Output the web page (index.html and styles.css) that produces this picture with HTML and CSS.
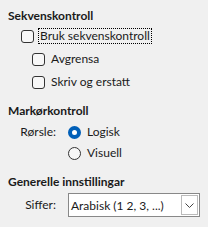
FILE: index.html
```html
<!DOCTYPE html>
<html lang="nn">
<head>
  <meta charset="UTF-8">
  <title>Innstillingar</title>
  <link rel="stylesheet" href="styles.css">
</head>
<body>

  <div class="panel">
    <h2 class="heading">Sekvenskontroll</h2>
    <label class="check first">
      <span class="box"></span>
      <span class="text focused">Bruk sekvenskontroll</span>
    </label>
    <label class="check sub">
      <span class="box"></span>
      <span class="text">Avgrensa</span>
    </label>
    <label class="check sub">
      <span class="box"></span>
      <span class="text">Skriv og erstatt</span>
    </label>

    <h2 class="heading">Markørkontroll</h2>
    <div class="field radio-field">
      <span class="field-label">Rørsle:</span>
      <div class="radios">
        <label class="radio checked"><span class="dot"></span><span class="text">Logisk</span></label>
        <label class="radio"><span class="dot"></span><span class="text">Visuell</span></label>
      </div>
    </div>

    <h2 class="heading">Generelle innstillingar</h2>
    <div class="field select-field">
      <span class="field-label">Siffer:</span>
      <div class="select">
        <span class="select-value">Arabisk (1 2, 3, ...)</span>
        <span class="select-btn">
          <svg width="9" height="5" viewBox="0 0 9 5"><path d="M0.5 0.5 L4.5 4.5 L8.5 0.5" fill="none" stroke="#444" stroke-width="1"/></svg>
        </span>
      </div>
    </div>
  </div>

</body>
</html>
```

FILE: styles.css
```css
body {
  margin: 0;
  padding: 0;
  background-color: #f0f0f0;
  color: #1a1a1a;
  font-family: 'Lato', 'Noto Sans', sans-serif;
  font-size: 12px;
}

.panel {
  display: flex;
  flex-direction: column;
  padding: 8px 0 0 8px;
}

.heading {
  margin: 0;
  font-size: 12px;
  font-weight: bold;
  line-height: 16px;
}

.check {
  display: flex;
  align-items: center;
  gap: 4px;
  height: 16px;
}

.check.first {
  margin: 4px 0 0 13px;
}

.check.sub {
  margin: 7px 0 0 24px;
}

.box {
  width: 11px;
  height: 11px;
  border: 1px solid #333;
  border-radius: 3px;
  background-color: #f7f7f7;
}

.text {
  line-height: 14px;
  padding: 0 1px;
  border: 1px dotted transparent;
}

.text.focused {
  border-color: #000;
}

.check.sub + .heading {
  margin-top: 13px;
}

.field {
  display: grid;
  grid-template-columns: 48px auto;
  column-gap: 12px;
  align-items: start;
}

.field-label {
  text-align: right;
  line-height: 16px;
}

.radio-field {
  margin-top: 5px;
}

.radios {
  display: flex;
  flex-direction: column;
  gap: 5px;
}

.radio {
  display: flex;
  align-items: center;
  gap: 4px;
  height: 16px;
}

.dot {
  width: 11px;
  height: 11px;
  border: 1px solid #333;
  border-radius: 50%;
  background-color: #f7f7f7;
}

.radio.checked .dot {
  width: 5px;
  height: 5px;
  border: 4px solid #005fb8;
  background-color: #fff;
}

.radio-field + .heading {
  margin-top: 13px;
}

.select-field {
  margin-top: 3px;
  align-items: center;
}

.select {
  display: flex;
  align-items: center;
  justify-content: space-between;
  width: 130px;
  height: 22px;
  border: 1px solid #888;
  background-color: #fff;
}

.select-value {
  padding-left: 2px;
}

.select-btn {
  display: flex;
  align-items: center;
  justify-content: center;
  width: 15px;
  height: 18px;
  margin-right: 1px;
  border: 1px solid #bbb;
}
```
